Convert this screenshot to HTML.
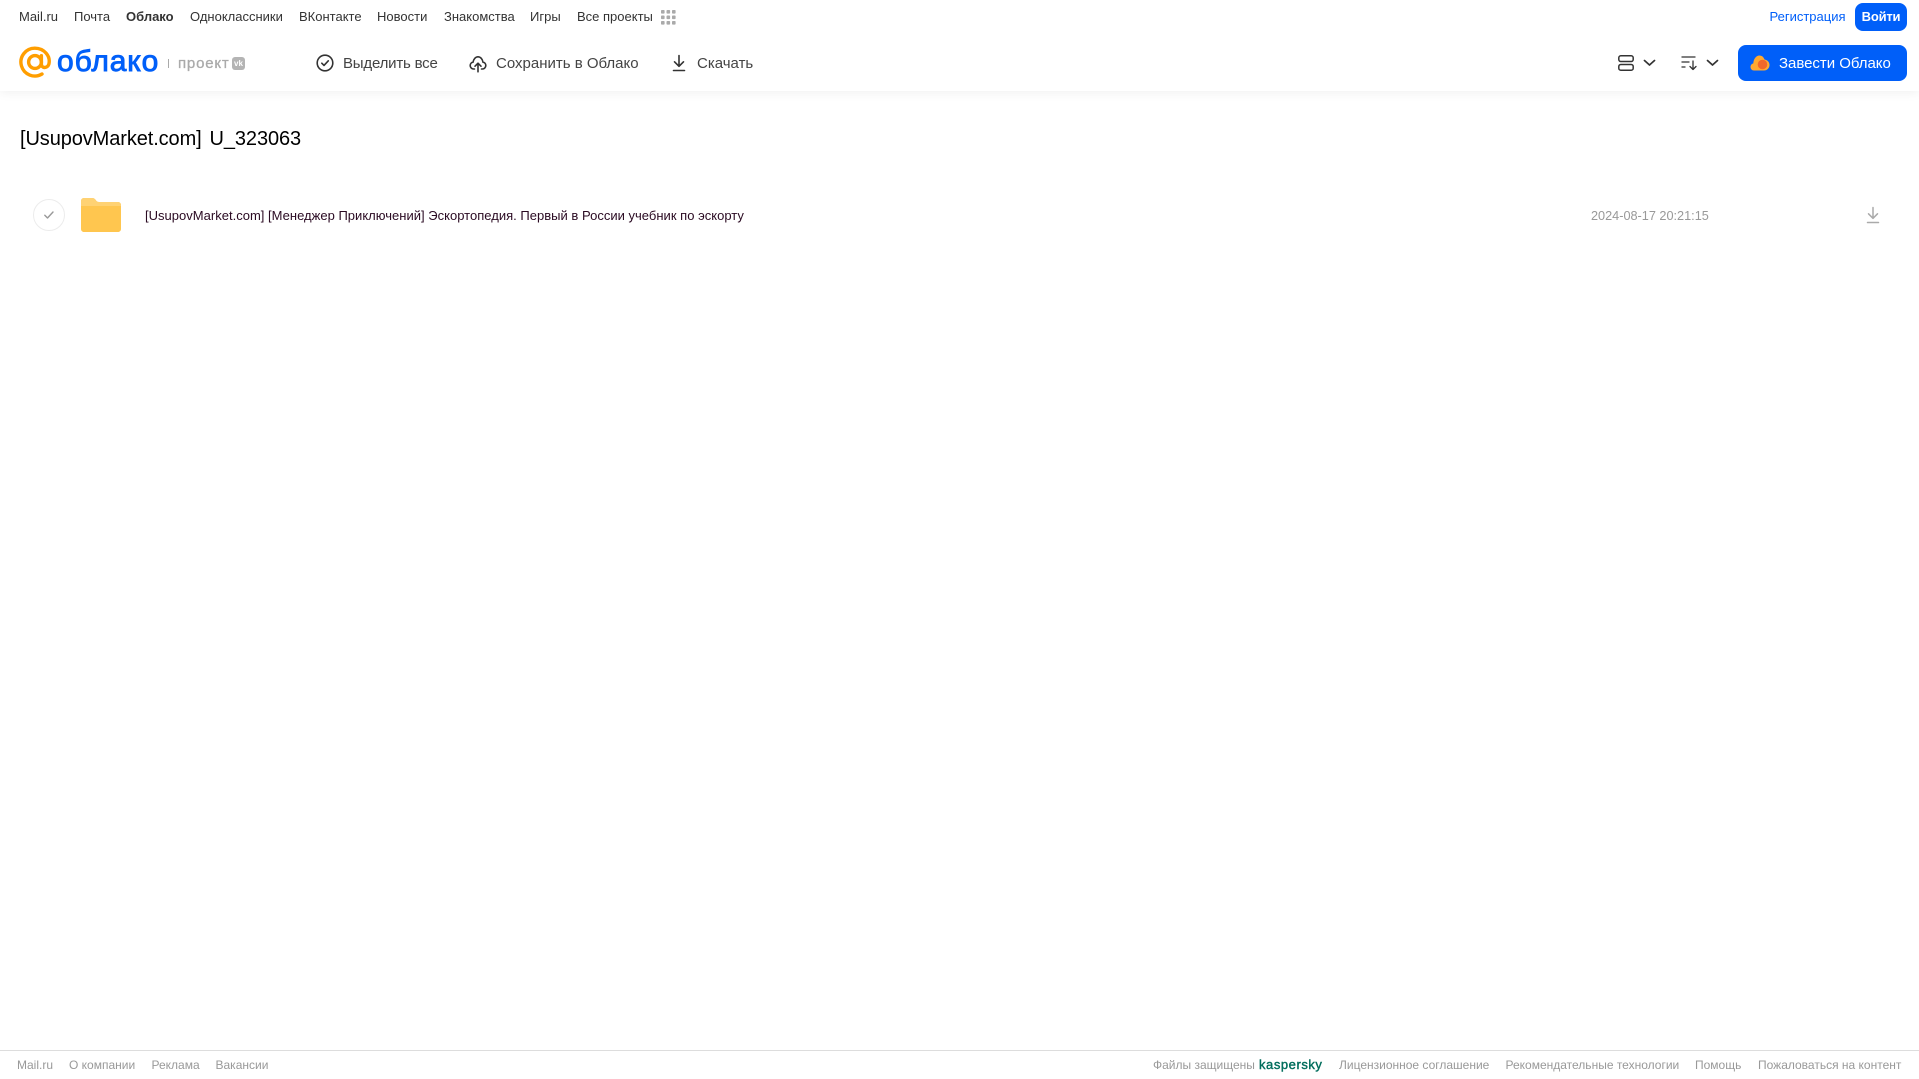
<!DOCTYPE html>
<html lang="ru">
<head>
<meta charset="utf-8">
<title>Облако</title>
<style>
html,body{margin:0;padding:0;width:1919px;height:1079px;overflow:hidden;background:#fff;}
body{font-family:"Liberation Sans",Arial,sans-serif;position:relative;}
.t{position:absolute;white-space:nowrap;line-height:20px;height:20px;}
.n{font-size:13px;color:#333;top:7px;}
.a{font-size:15px;color:#444;top:54px;}
.f{font-size:12px;color:#999;top:1055px;}
svg{position:absolute;display:block;}
#hdr{position:absolute;left:0;top:0;width:1919px;height:91px;background:#fff;box-shadow:0 2px 10px rgba(0,0,0,.06);}
</style>
</head>
<body>
<div id="hdr"></div>

<span class="t n" style="left:19px">Mail.ru</span>
<span class="t n" style="left:74px">Почта</span>
<span class="t n" style="left:126px;font-weight:700">Облако</span>
<span class="t n" style="left:190px">Одноклассники</span>
<span class="t n" style="left:299px">ВКонтакте</span>
<span class="t n" style="left:377px">Новости</span>
<span class="t n" style="left:444px">Знакомства</span>
<span class="t n" style="left:530px">Игры</span>
<span class="t n" style="left:577px">Все проекты</span>
<svg style="left:661px;top:10px" width="15" height="15" viewBox="0 0 15 15" fill="#aaa">
<rect x="0" y="0" width="3.6" height="3.6" rx=".8"/><rect x="5.5" y="0" width="3.6" height="3.6" rx=".8"/><rect x="11" y="0" width="3.6" height="3.6" rx=".8"/>
<rect x="0" y="5.5" width="3.6" height="3.6" rx=".8"/><rect x="5.5" y="5.5" width="3.6" height="3.6" rx=".8"/><rect x="11" y="5.5" width="3.6" height="3.6" rx=".8"/>
<rect x="0" y="11" width="3.6" height="3.6" rx=".8"/><rect x="5.5" y="11" width="3.6" height="3.6" rx=".8"/><rect x="11" y="11" width="3.6" height="3.6" rx=".8"/>
</svg>

<span class="t" style="left:1769.5px;top:7px;font-size:13px;color:#005ff9">Регистрация</span>
<div style="position:absolute;left:1855px;top:3px;width:52px;height:28px;background:#005ff9;border-radius:8px"></div>
<span class="t" style="left:1855px;top:7px;width:52px;text-align:center;font-size:13px;font-weight:700;letter-spacing:-.2px;color:#fff">Войти</span>

<svg style="left:18px;top:46px" width="34" height="34" viewBox="0 0 34 34" fill="none" stroke="#ff9e00" stroke-width="3.4" stroke-linecap="round">
<circle cx="17" cy="16" r="6.4"/>
<path d="M23.400 9.700V18c0 4.600 5.800 4.600 7.400.4C33 10 26 2.200 16.800 2.200A13.900 13.900 0 1 0 24 28"/>
</svg>
<span class="t" style="left:57px;top:46px;height:32px;line-height:32px;font-size:30px;letter-spacing:.9px;color:#005ff9;-webkit-text-stroke:.9px #005ff9">облако</span>
<div style="position:absolute;left:168px;top:59px;width:1px;height:9px;background:#aaa"></div>
<span class="t" style="left:178px;top:53.500px;font-size:15px;letter-spacing:.8px;color:#aaa;-webkit-text-stroke:.3px #aaa">проект</span>
<div style="position:absolute;left:232px;top:57px;width:13px;height:13px;border-radius:3px;background:#b4b4b4;color:#fff;font-size:8px;font-weight:700;line-height:13px;text-align:center">vk</div>

<svg style="left:316px;top:54px" width="18" height="18" viewBox="0 0 18 18" fill="none" stroke="#333" stroke-width="1.6" stroke-linecap="round" stroke-linejoin="round">
<circle cx="9" cy="9" r="7.8"/><path d="M5.8 9.2 8 11.4 12.3 6.8"/>
</svg>
<span class="t a" style="left:343px;letter-spacing:-.2px">Выделить все</span>

<svg style="left:469px;top:55px" width="18" height="18" viewBox="0 0 18 18" fill="none" stroke="#333" stroke-width="1.6" stroke-linecap="round" stroke-linejoin="round">
<path d="M5.500 14H4.600A3.400 3.400 0 0 1 1.200 10.500C1.200 8.800 2.500 7.400 4 7.200 4.600 4 6.600 1.800 9 1.800c2.500 0 4.500 2.200 5 5.400 1.600.2 2.800 1.600 2.800 3.300 0 1.900-1.500 3.500-3.300 3.500h-1"/>
<path d="M9 16.800V8.500M6 11.200 9 8.200 12 11.200"/>
</svg>
<span class="t a" style="left:496px">Сохранить в Облако</span>

<svg style="left:671px;top:54px" width="16" height="18" viewBox="0 0 16 18" fill="none" stroke="#333" stroke-width="1.6" stroke-linecap="round" stroke-linejoin="round">
<path d="M8 1.500V12M3.500 7.800 8 12.300 12.500 7.800M2.500 16.500H13.500"/>
</svg>
<span class="t a" style="left:697px">Скачать</span>

<svg style="left:1618px;top:55px" width="16" height="16" viewBox="0 0 16 16" fill="none" stroke="#333" stroke-width="1.500">
<rect x=".8" y=".8" width="14.400" height="5.700" rx="2"/><rect x=".8" y="9.500" width="14.400" height="5.700" rx="2"/>
</svg>
<svg style="left:1643px;top:59px" width="13" height="8" viewBox="0 0 13 8" fill="none" stroke="#333" stroke-width="1.700" stroke-linecap="round" stroke-linejoin="round"><path d="M1.500 1.500 6.500 6 11.500 1.500"/></svg>
<svg style="left:1681px;top:55px" width="17" height="16" viewBox="0 0 17 16" fill="none" stroke="#333" stroke-width="1.300" stroke-linecap="round" stroke-linejoin="round">
<path d="M1 2H14M1 7H8M1 12H4M12 6V14.500M9 11.500 12 14.500 15 11.500"/>
</svg>
<svg style="left:1705.500px;top:59px" width="13" height="8" viewBox="0 0 13 8" fill="none" stroke="#333" stroke-width="1.700" stroke-linecap="round" stroke-linejoin="round"><path d="M1.500 1.500 6.500 6 11.500 1.500"/></svg>

<div style="position:absolute;left:1738px;top:45px;width:169px;height:36px;background:#005ff9;border-radius:8px"></div>
<svg style="left:1750px;top:54px" width="20" height="18" viewBox="0 0 20 18">
<path d="M4 16.500C1.800 16.500.5 14.800.5 13 .5 11.200 1.600 9.800 3.300 9.400 3.500 5.200 6 1.500 9.500 1.500c2.500 0 4.300 1.800 5 4 2.700.3 5 2.500 5 5.500 0 3-2.300 5.500-5.500 5.500Z" fill="#ffa930"/>
<circle cx="12.500" cy="10.500" r="4.800" fill="#f2682a"/>
</svg>
<span class="t" style="left:1779px;top:54px;font-size:15px;letter-spacing:-.03px;color:#fff">Завести Облако</span>

<span class="t" style="left:20px;top:125.500px;height:26px;line-height:26px;font-size:20px;word-spacing:2.500px;letter-spacing:-.1px;color:#000">[UsupovMarket.com] U_323063</span>

<div style="position:absolute;left:33px;top:199px;width:30px;height:30px;border:1px solid #ececec;border-radius:50%"></div>
<svg style="left:43px;top:209px" width="12" height="12" viewBox="0 0 12 12" fill="none" stroke="#999" stroke-width="1.400" stroke-linecap="round" stroke-linejoin="round"><path d="M1.800 6.300 4.500 9 10 3"/></svg>
<svg style="left:81px;top:198px" width="40" height="34" viewBox="0 0 40 34">
<path d="M0 3C0 1.300 1.300 0 3 0H11C13 0 14 1 15 2.400 15.800 3.500 16.500 4 18 4H37C38.700 4 40 5.300 40 7V31C40 32.700 38.700 34 37 34H3C1.300 34 0 32.700 0 31Z" fill="#ffc64f"/>
<path d="M0 3C0 1.300 1.300 0 3 0H11C13 0 14 1 15 2.400 15.800 3.500 16.500 4 18 4H37C38.700 4 40 5.300 40 7V8H0Z" fill="#ffd273"/>
</svg>
<span class="t" style="left:145px;top:206px;font-size:13px;letter-spacing:.012px;color:#2a0a22">[UsupovMarket.com] [Менеджер Приключений] Эскортопедия. Первый в России учебник по эскорту</span>
<span class="t" style="left:1591px;top:206px;font-size:12.700px;color:#999">2024-08-17 20:21:15</span>
<svg style="left:1866px;top:206px" width="14" height="18" viewBox="0 0 14 18" fill="none" stroke="#aaa" stroke-width="1.500" stroke-linecap="round" stroke-linejoin="round">
<path d="M7 1.500V12M2.500 7.800 7 12.300 11.500 7.800M1.500 16.500H12.500"/>
</svg>

<div style="position:absolute;left:0;top:1050px;width:1919px;height:1px;background:#ddd"></div>
<span class="t f" style="left:17px">Mail.ru</span>
<span class="t f" style="left:69px">О компании</span>
<span class="t f" style="left:151.500px">Реклама</span>
<span class="t f" style="left:215.500px">Вакансии</span>
<span class="t f" style="left:1153px">Файлы защищены</span>
<span class="t" style="left:1259px;top:1055px;font-size:13px;letter-spacing:.55px;color:#006d5c;-webkit-text-stroke:.4px #006d5c">kaspersky</span>
<span class="t f" style="left:1339px">Лицензионное соглашение</span>
<span class="t f" style="left:1505.500px">Рекомендательные технологии</span>
<span class="t f" style="left:1695px">Помощь</span>
<span class="t f" style="left:1758px">Пожаловаться на контент</span>
</body>
</html>
